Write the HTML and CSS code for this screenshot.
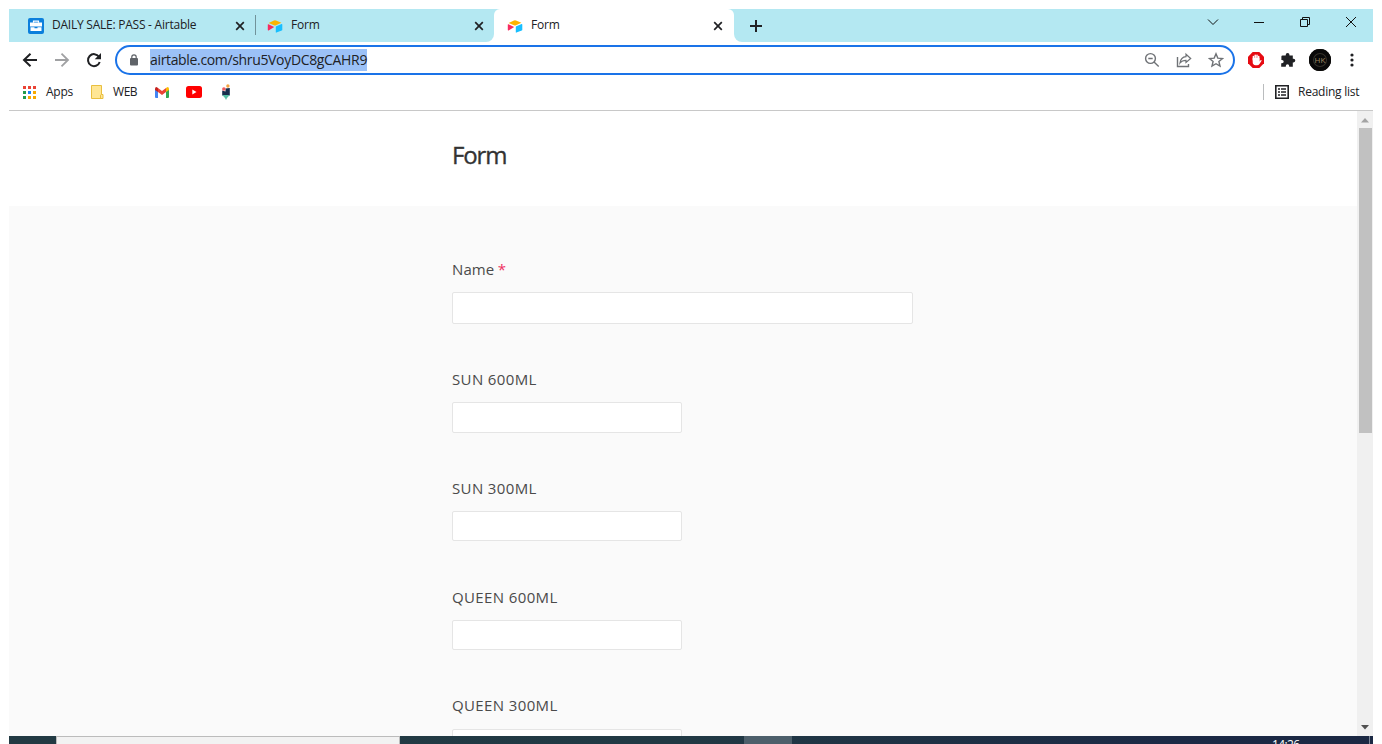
FILE: index.html
```html
<!DOCTYPE html>
<html lang="en">
<head>
<meta charset="utf-8">
<title>Form</title>
<link rel="stylesheet" href="styles.css">
</head>
<body>
<svg class="defs" width="0" height="0">
  <symbol id="airtable" viewBox="0 0 16 16"><path fill="#fcb400" d="M1.600 4.900 7 2.500q1-.4 2 0l5.400 2.300L9 7.200q-1 .4-2 0z"/><path fill="#f82b60" d="M.8 6.500q0-.5.600-.3L7.200 9.100l-5.600 3.300q-.8.300-.8-.4z"/><path fill="#18bfff" d="M8.800 8.900q0-.5.500-.7l5.400-2.100q.6-.2.600.4v5.300q0 .5-.5.700l-5.400 2.100q-.6.200-.6-.4z"/></symbol>
  <symbol id="close" viewBox="0 0 10 10"><path d="m1.200 1.200 7.600 7.600m0-7.600L1.200 8.800" fill="none" stroke="#202124" stroke-width="1.700"/></symbol>
</svg>
<div class="window">
  <header class="tabs">
    <div class="tab tab-first">
      <svg class="favicon" viewBox="0 0 16 16"><rect width="16" height="16" rx="2" fill="#0b7fdc"/><path d="M5.500 4.800V3.200h5v1.600" fill="none" stroke="#fff" stroke-width="1.200"/><path fill="#fff" d="M2 4.500h12v4H2zM2.500 9.200h4v1h3v-1h4V13h-11z"/></svg>
      <span class="tab-title sale">DAILY SALE: PASS - Airtable</span>
      <svg class="close"><use href="#close"/></svg>
    </div>
    <div class="tab tab-second">
      <svg class="favicon"><use href="#airtable"/></svg>
      <span class="tab-title">Form</span>
      <svg class="close"><use href="#close"/></svg>
    </div>
    <div class="tab-slot">
      <div class="tab tab-active">
        <svg class="favicon"><use href="#airtable"/></svg>
        <span class="tab-title">Form</span>
        <svg class="close"><use href="#close"/></svg>
      </div>
    </div>
    <div class="tab-rest">
      <svg class="plus" viewBox="0 0 12 12"><path d="M6 0v12M0 6h12" stroke="#202124" stroke-width="2"/></svg>
      <div class="controls">
        <svg width="12" height="12" viewBox="0 0 12 12"><path d="m1 3.500 5 5 5-5"/></svg>
        <svg width="12" height="12" viewBox="0 0 12 12"><path d="M1 6.500h10"/></svg>
        <svg width="12" height="12" viewBox="0 0 12 12"><path d="M1.500 3.500h7v7h-7zM3.500 3.500v-2h7v7h-2"/></svg>
        <svg width="12" height="12" viewBox="0 0 12 12"><path d="m1 1 10 10m0-10L1 11"/></svg>
      </div>
    </div>
  </header>
  <div class="toolbar">
    <svg class="nav" viewBox="0 0 16 16"><path d="M15 8H2m6.500-6.300L2 8l6.500 6.300" fill="none" stroke="#202124" stroke-width="2"/></svg>
    <svg class="nav" viewBox="0 0 16 16"><path d="M1 8h13M7.500 1.700 14 8l-6.500 6.300" fill="none" stroke="#a0a1a3" stroke-width="1.800"/></svg>
    <svg class="nav" viewBox="0 0 16 16"><path d="M13 4.800A6 6 0 1 0 13.700 10" fill="none" stroke="#202124" stroke-width="2"/><path fill="#202124" d="M15 1v6.300H8.700z"/></svg>
    <div class="omnibox">
      <svg class="lock" width="10" height="12" viewBox="0 0 10 12"><rect x="1" y="4" width="8" height="7.500" rx="1" fill="#5f6368"/><path d="M2.800 4.500V3a2.200 2.200 0 0 1 4.400 0v1.500" fill="none" stroke="#5f6368" stroke-width="1.200"/></svg>
      <span class="url"><span class="url-text">airtable.com/shru5VoyDC8gCAHR9</span></span>
      <div class="actions">
        <svg viewBox="0 0 16 16"><circle cx="6.500" cy="6.500" r="4.900"/><path d="m10 10 4.700 4.500M4.300 6.500h4.400"/></svg>
        <svg viewBox="0 0 16 16"><path d="M1.500 5v9.500h11V12"/><path d="M10 2.200 14.700 6.500 10 10.500V8.300C7.200 8.300 5.500 9 4 11c.5-3.600 2.500-6 6-6.300z" stroke-width="1.200"/></svg>
        <svg viewBox="0 0 16 16"><path d="m8 1.800 1.800 4.300 4.700.4-3.600 3 1.100 4.600L8 11.700 4 14.100l1.100-4.600-3.600-3 4.700-.4z"/></svg>
      </div>
    </div>
    <svg class="ext" viewBox="0 0 16 16"><path fill="#e60b12" d="M4.700 0h6.600L16 4.700v6.600L11.300 16H4.700L0 11.300V4.700z"/><path d="M5.400 8V4.500M7.200 8V3.200M9 8V3.200M10.700 9V4.500" stroke="#fff" stroke-width="1.500" stroke-linecap="round"/><path fill="#fff" d="M4.700 6h6.700v3.500l1.200-1.300c.7-.5 1.200 0 .8.700L11.500 12q-.8 1.300-2.500 1.300H7.500q-2.800-.3-2.800-3z"/></svg>
    <svg class="ext puzzle" viewBox="0 0 16 16"><path fill="#202124" d="M2.500 3.500h3.200V3a1.900 1.900 0 0 1 3.800 0v.5h3.300v3.300h.7a1.800 1.800 0 0 1 0 3.600h-.7v4.400H9.200V14a1.700 1.700 0 0 0-3.400 0v.8H1.200v-3.500H2a1.700 1.700 0 0 0 0-3.400h-.6V4.500q0-1 1.100-1z"/></svg>
    <span class="avatar">HK</span>
    <svg class="dots" viewBox="0 0 4 14"><g fill="#202124"><circle cx="2" cy="2" r="1.600"/><circle cx="2" cy="7" r="1.600"/><circle cx="2" cy="12" r="1.600"/></g></svg>
  </div>
  <nav class="bookmarks">
    <svg class="grid" viewBox="0 0 13 13"><path fill="#ea4335" d="M0 0h3v3H0zM5 0h3v3H5zM10 0h3v3h-3z"/><path fill="#229a4d" d="M0 5h3v3H0zM0 10h3v3H0z"/><path fill="#1a82f7" d="M5 5h3v3H5z"/><path fill="#f7a900" d="M10 5h3v3h-3zM5 10h3v3H5zM10 10h3v3h-3z"/></svg>
    <span class="apps">Apps</span>
    <svg class="folder" viewBox="0 0 13 14"><path fill="#ffe694" stroke="#e9bf3f" d="M.5.5h10v9h1.500v4H.5zM10.500 9.500q-1 0-1 1.500v2.500"/></svg>
    <span class="web">WEB</span>
    <svg class="gmail" viewBox="0 0 14 11"><path fill="#4285f4" d="M0 2h3v9H1q-1 0-1-1z"/><path fill="#34a853" d="M11 2h3v8q0 1-1 1h-2z"/><path fill="#ea4335" d="m3 1 4 3 4-3v4L7 8 3 5z"/><path fill="#c5221f" d="M0 1.800Q0 0 1.500 0L3 1v4L0 3z"/><path fill="#fbbc04" d="M14 1.800Q14 0 12.500 0L11 1v4l3-2z"/></svg>
    <svg class="youtube" viewBox="0 0 16 12"><rect width="16" height="12" rx="2.500" fill="#f00"/><path fill="#fff" d="M6.300 3.500v5l4.200-2.500z"/></svg>
    <svg class="pen" viewBox="0 0 10 16"><path fill="#172d4d" d="M1.200 6.500 4.500 7.500V4.500L8.800 4v7.500H1.200z"/><circle cx="2.900" cy="5" r="1.800" fill="#f15b5b"/><circle cx="6.900" cy="2" r="1.700" fill="#f4a340"/><path fill="#57bfa5" d="M1.200 11h7.600L6 14l-1 2-1-2z"/></svg>
    <div class="reading">
      <svg viewBox="0 0 14 14"><path fill="none" stroke="#202124" stroke-width="1.600" d="M.8.800h12.400v12.400H.8z"/><path stroke="#202124" stroke-width="1.400" d="M3 4h2m1 0h5M3 7h2m1 0h5M3 10h2m1 0h5"/></svg>
      <span class="reading-text">Reading list</span>
    </div>
  </nav>
  <main class="page">
    <div class="scroll-area">
      <div class="form-head"><h1>Form</h1></div>
      <form class="fields">
        <label class="field name"><span class="label">Name <b>*</b></span><input type="text"></label>
        <label class="field sun-600"><span class="label">SUN 600ML</span><input type="text"></label>
        <label class="field"><span class="label">SUN 300ML</span><input type="text"></label>
        <label class="field before-last"><span class="label">QUEEN 600ML</span><input type="text"></label>
        <label class="field last"><span class="label">QUEEN 300ML</span><input type="text"></label>
      </form>
    </div>
    <div class="scrollbar">
      <svg width="8" height="5" viewBox="0 0 8 5"><path fill="#a3a3a3" d="m4 0 4 4.500H0z"/></svg>
      <div class="thumb"></div>
      <svg class="down" width="8" height="5" viewBox="0 0 8 5"><path fill="#505050" d="m4 4.500 4-4.500H0z"/></svg>
    </div>
  </main>
  <footer class="taskbar"><div class="search"></div><div class="task"></div><div class="clock">14:26</div><div class="peek"></div></footer>
</div>
</body>
</html>
```
FILE: styles.css
```css
* { box-sizing: border-box; }
body { margin: 0; background: #fff; font-family: "Open Sans", "Noto Sans", sans-serif; overflow: hidden; }
svg { display: block; flex: none; }
.defs { position: absolute; }
.window { width: 1364px; height: 735px; margin: 9px 9px 0; display: flex; flex-direction: column; overflow: hidden; }
.tabs { height: 33px; flex: none; display: flex; background: #fff; font-size: 12px; color: #202124; }
.tab { display: flex; align-items: center; white-space: nowrap; }
.tab-first { width: 246px; padding: 0 10px 0 19px; background: #b4e8f2; }
.tab-second { width: 239px; padding: 0 10px 0 12px; border-bottom-right-radius: 8px; background: linear-gradient(#71939a, #71939a) 0 6px / 1px 20px no-repeat, #b4e8f2; }
.tab-slot { width: 240px; background: linear-gradient(#b4e8f2, #b4e8f2) 0 0 / 100% 8px no-repeat; }
.tab-active { height: 33px; padding: 0 11px 0 13px; background: #fff; border-radius: 6px 6px 0 0; }
.favicon { width: 16px; height: 16px; margin-right: 8px; }
.tab-title { line-height: 18px; letter-spacing: -.2px; position: relative; top: -1px; }
.sale { letter-spacing: -.24px; }
.close { width: 10px; height: 10px; margin-left: auto; }
.tab-rest { flex: 1; display: flex; align-items: center; background: #b4e8f2; border-bottom-left-radius: 8px; padding: 0 16px; }
.plus { width: 12px; height: 12px; }
.controls { display: flex; gap: 34px; margin-left: auto; padding-bottom: 7px; fill: none; stroke: #111; stroke-width: 1; }
.toolbar { height: 36px; flex: none; display: flex; align-items: center; padding-left: 13px; }
.nav { width: 16px; height: 16px; margin-right: 16px; }
.nav:nth-child(3) { margin-right: 13px; }
.omnibox { width: 1120px; height: 30px; border: 2px solid #1a73e8; border-radius: 15px; display: flex; align-items: center; margin-right: 13px; padding: 0 9px 0 12px; flex: none; }
.lock { margin-right: 11px; }
.url { width: 217px; height: 22px; background: #9bc1f7; color: #202124; font-size: 14px; line-height: 21px; white-space: nowrap; }
.url-text { letter-spacing: -.34px; }
.actions { display: flex; gap: 16px; margin-left: auto; fill: none; stroke: #6f7276; stroke-width: 1.400; }
.actions svg { width: 16px; height: 16px; }
.ext { width: 16px; height: 16px; margin-right: 16px; }
.puzzle { margin-right: 13px; }
.avatar { width: 22px; height: 22px; border-radius: 50%; background: #090909; color: #a08a65; font-size: 8px; line-height: 21px; text-align: center; box-shadow: inset 0 0 0 4px #090909, inset 0 0 0 5px #35312a; }
.dots { width: 4px; height: 14px; margin-left: 19px; }
.bookmarks { height: 33px; flex: none; display: flex; align-items: center; padding: 0 13px 4px 14px; border-bottom: 1px solid #c8c8c8; color: #202124; font-size: 12px; line-height: 16px; }
.bookmarks span { padding-bottom: 1px; }
.grid { width: 13px; height: 13px; margin-right: 10px; }
.apps { width: 45px; letter-spacing: -.25px; }
.folder { width: 13px; height: 14px; margin-right: 9px; }
.web { width: 42px; letter-spacing: -.45px; }
.gmail { width: 14px; height: 11px; margin-right: 17px; }
.youtube { width: 16px; height: 12px; margin-right: 19px; }
.pen { width: 10px; height: 16px; }
.reading { margin-left: auto; display: flex; align-items: center; width: 97px; height: 16px; border-left: 1px solid #babcbe; padding-left: 11px; white-space: nowrap; }
.reading svg { width: 14px; height: 14px; margin-right: 9px; }
.reading-text { letter-spacing: -.25px; }
.page { height: 625px; flex: none; display: flex; overflow: hidden; }
.scroll-area { flex: 1; background: #fafafa; overflow: hidden; }
.form-head { height: 95px; background: #fff; padding: 28px 0 0 443px; }
h1 { margin: 0; font-size: 24px; line-height: 32px; font-weight: 500; letter-spacing: -1.1px; color: #333; -webkit-text-stroke: .35px #333; }
.fields { padding: 53px 0 0 443px; }
.field { display: block; width: 230px; height: 109px; }
.label { display: block; height: 22px; margin-bottom: 11px; line-height: 21px; font-size: 15px; letter-spacing: .38px; color: #4a4a4a; white-space: nowrap; }
.label b { font-weight: 400; color: #ef3061; margin-left: -.5px; }
.field input { display: block; width: 100%; height: 30px; padding: 0; border: 1px solid #e5e5e5; border-radius: 2px; background: #fff; }
.name { width: 461px; height: 110px; }
.name .label { letter-spacing: .1px; }
.name input { height: 32px; }
.sun-600 input { height: 31px; }
.before-last { height: 108px; }
.last .label { margin-bottom: 12px; }
.scrollbar { width: 16px; background: #f0f0f0; display: flex; flex-direction: column; align-items: center; padding: 7px 0 6px; }
.thumb { width: 13px; height: 305px; margin: 5px 0 0 1px; background: #c1c1c1; }
.down { margin-top: auto; }
.taskbar { height: 8px; flex: none; display: flex; overflow: hidden; background: linear-gradient(90deg, #223a43, #213944 50%, #1b2945 85%, #1b2843); }
.search { width: 344px; margin-left: 47px; background: #f2f2f2; border: 1px solid #bbb; border-bottom: 0; }
.task { width: 48px; margin-left: 344px; background: #4d5f6b; }
.clock { margin-left: 480px; padding-top: 3px; width: 40px; color: #fff; font-size: 12px; line-height: 12px; letter-spacing: -.6px; }
.peek { width: 1px; margin: 0 3px 0 auto; background: #7c8798; }
```
